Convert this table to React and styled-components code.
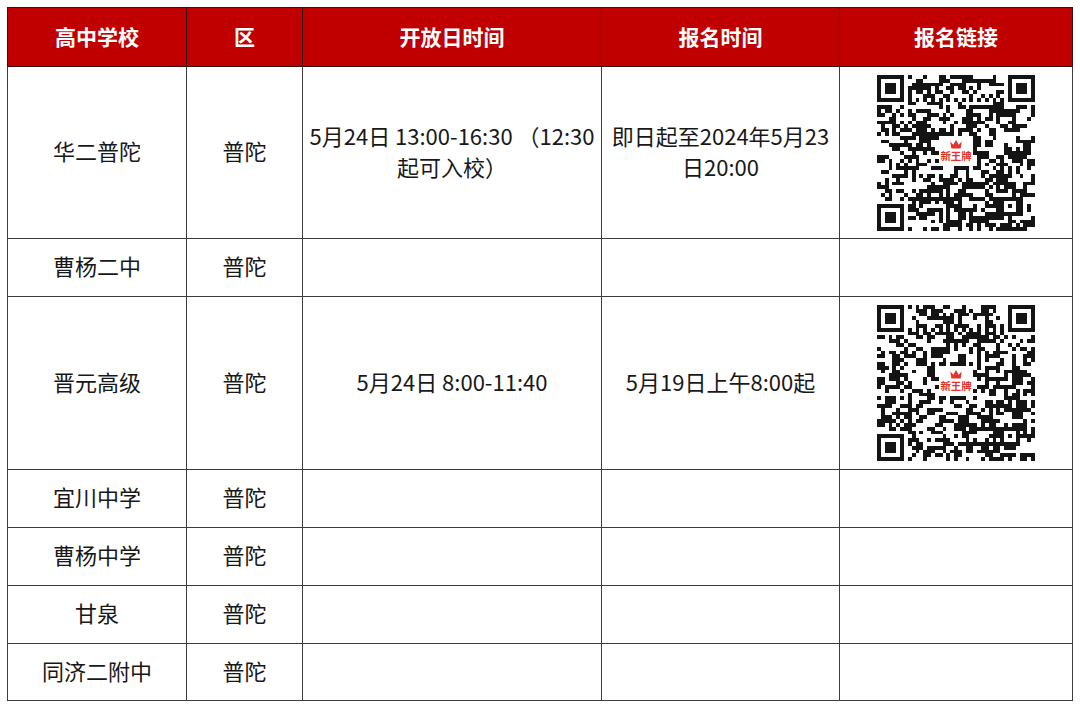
import React from "react";
import styled, { createGlobalStyle } from "styled-components";

const GlobalStyle = createGlobalStyle`
  html, body {
    margin: 0;
    padding: 0;
    background: #ffffff;
  }
  body {
    font-family: "Noto Sans CJK SC", "Microsoft YaHei", "Noto Sans", sans-serif;
  }
`;

const Page = styled.div`
  padding: 7px 0 0 7px;
  width: 1080px;
  height: 708px;
  box-sizing: border-box;
  overflow: hidden;
`;

const Table = styled.table`
  border-collapse: collapse;
  table-layout: fixed;
  width: 1065px;
  font-family: "Noto Sans CJK SC", "Microsoft YaHei", sans-serif;
`;

const HeadRow = styled.tr`
  height: 59px;
  background: #c00000;
`;

const HeadCell = styled.th`
  border: 1px solid #3a1010;
  color: #ffffff;
  font-size: 21px;
  font-weight: 700;
  text-align: center;
  vertical-align: middle;
  padding: 0 0 2px;
`;

const Row = styled.tr`
  height: ${(p) => p.$h}px;
`;

const Cell = styled.td`
  border: 1px solid #3c3c3c;
  color: #181818;
  font-size: 22px;
  line-height: 30.5px;
  text-align: center;
  vertical-align: middle;
  padding: 0 4px ${(p) => (p.$qr ? 0 : 4)}px;
  white-space: nowrap;
`;

const QrBox = styled.div`
  display: flex;
  justify-content: center;
  align-items: center;
`;

function mulberry32(a) {
  return function () {
    a |= 0;
    a = (a + 0x6d2b79f5) | 0;
    let t = Math.imul(a ^ (a >>> 15), 1 | a);
    t = (t + Math.imul(t ^ (t >>> 7), 61 | t)) ^ t;
    return ((t ^ (t >>> 14)) >>> 0) / 4294967296;
  };
}

function buildQr(seed) {
  const N = 41;
  const rnd = mulberry32(seed);
  const g = [];
  for (let y = 0; y < N; y++) {
    const row = [];
    for (let x = 0; x < N; x++) {
      const left = x > 0 ? row[x - 1] : 0;
      const up = y > 0 ? g[y - 1][x] : 0;
      const p = 0.38 + 0.14 * left + 0.12 * up;
      row.push(rnd() < p ? 1 : 0);
    }
    g.push(row);
  }
  const finder = (ox, oy) => {
    for (let y = -1; y <= 7; y++) {
      for (let x = -1; x <= 7; x++) {
        const gx = ox + x;
        const gy = oy + y;
        if (gx < 0 || gy < 0 || gx >= N || gy >= N) continue;
        let v = 0;
        if (x >= 0 && x <= 6 && y >= 0 && y <= 6) {
          if (x === 0 || x === 6 || y === 0 || y === 6) v = 1;
          else if (x >= 2 && x <= 4 && y >= 2 && y <= 4) v = 1;
        }
        g[gy][gx] = v;
      }
    }
  };
  finder(0, 0);
  finder(N - 7, 0);
  finder(0, N - 7);
  for (let i = 8; i < N - 8; i++) {
    g[6][i] = i % 2 === 0 ? 1 : 0;
    g[i][6] = i % 2 === 0 ? 1 : 0;
  }
  for (let y = -2; y <= 2; y++) {
    for (let x = -2; x <= 2; x++) {
      const m = Math.max(Math.abs(x), Math.abs(y));
      g[34 + y][34 + x] = m === 1 ? 0 : 1;
    }
  }
  for (let y = 16; y <= 23; y++) {
    for (let x = 16; x <= 24; x++) g[y][x] = 0;
  }
  let d = "";
  for (let y = 0; y < N; y++) {
    for (let x = 0; x < N; x++) {
      if (g[y][x]) d += `M${x} ${y}h1v1h-1z`;
    }
  }
  return d;
}

const QR_A = buildQr(20240524);
const QR_B = buildQr(51908);

function QrCode({ path }) {
  return (
    <svg width="158" height="156" viewBox="0 0 41 41" preserveAspectRatio="none">
      <rect x="0" y="0" width="41" height="41" fill="#ffffff" />
      <path d={path} fill="#141414" shapeRendering="crispEdges" />
      <path
        d="M19.3 19.3 L19.0 17.5 L19.8 18.3 L20.5 17.1 L21.2 18.3 L22.0 17.5 L21.7 19.3 Z"
        fill="#e3342b"
      />
      <text
        x="20.5"
        y="22.3"
        fontSize="2.7"
        fontWeight="700"
        fill="#e3342b"
        textAnchor="middle"
        fontFamily="Noto Sans CJK SC, sans-serif"
      >
        新王牌
      </text>
    </svg>
  );
}

const rows = [
  { school: "华二普陀", h: 172, open: ["5月24日 13:00-16:30 （12:30", "起可入校）"], reg: ["即日起至2024年5月23", "日20:00"], qr: QR_A },
  { school: "曹杨二中", h: 58 },
  { school: "晋元高级", h: 173, open: ["5月24日 8:00-11:40"], reg: ["5月19日上午8:00起"], qr: QR_B },
  { school: "宜川中学", h: 58 },
  { school: "曹杨中学", h: 58 },
  { school: "甘泉", h: 58 },
  { school: "同济二附中", h: 57 },
];

function Lines({ items }) {
  if (!items) return null;
  return items.map((t, i) => (
    <React.Fragment key={i}>
      {i > 0 && <br />}
      {t}
    </React.Fragment>
  ));
}

export default function App() {
  return (
    <Page>
      <GlobalStyle />
      <Table>
        <colgroup>
          <col style={{ width: 179 }} />
          <col style={{ width: 116 }} />
          <col style={{ width: 299 }} />
          <col style={{ width: 238 }} />
          <col style={{ width: 233 }} />
        </colgroup>
        <thead>
          <HeadRow>
            <HeadCell>高中学校</HeadCell>
            <HeadCell>区</HeadCell>
            <HeadCell>开放日时间</HeadCell>
            <HeadCell>报名时间</HeadCell>
            <HeadCell>报名链接</HeadCell>
          </HeadRow>
        </thead>
        <tbody>
          {rows.map((r) => (
            <Row key={r.school} $h={r.h}>
              <Cell>{r.school}</Cell>
              <Cell>普陀</Cell>
              <Cell>
                <Lines items={r.open} />
              </Cell>
              <Cell>
                <Lines items={r.reg} />
              </Cell>
              <Cell $qr>
                {r.qr && (
                  <QrBox>
                    <QrCode path={r.qr} />
                  </QrBox>
                )}
              </Cell>
            </Row>
          ))}
        </tbody>
      </Table>
    </Page>
  );
}
